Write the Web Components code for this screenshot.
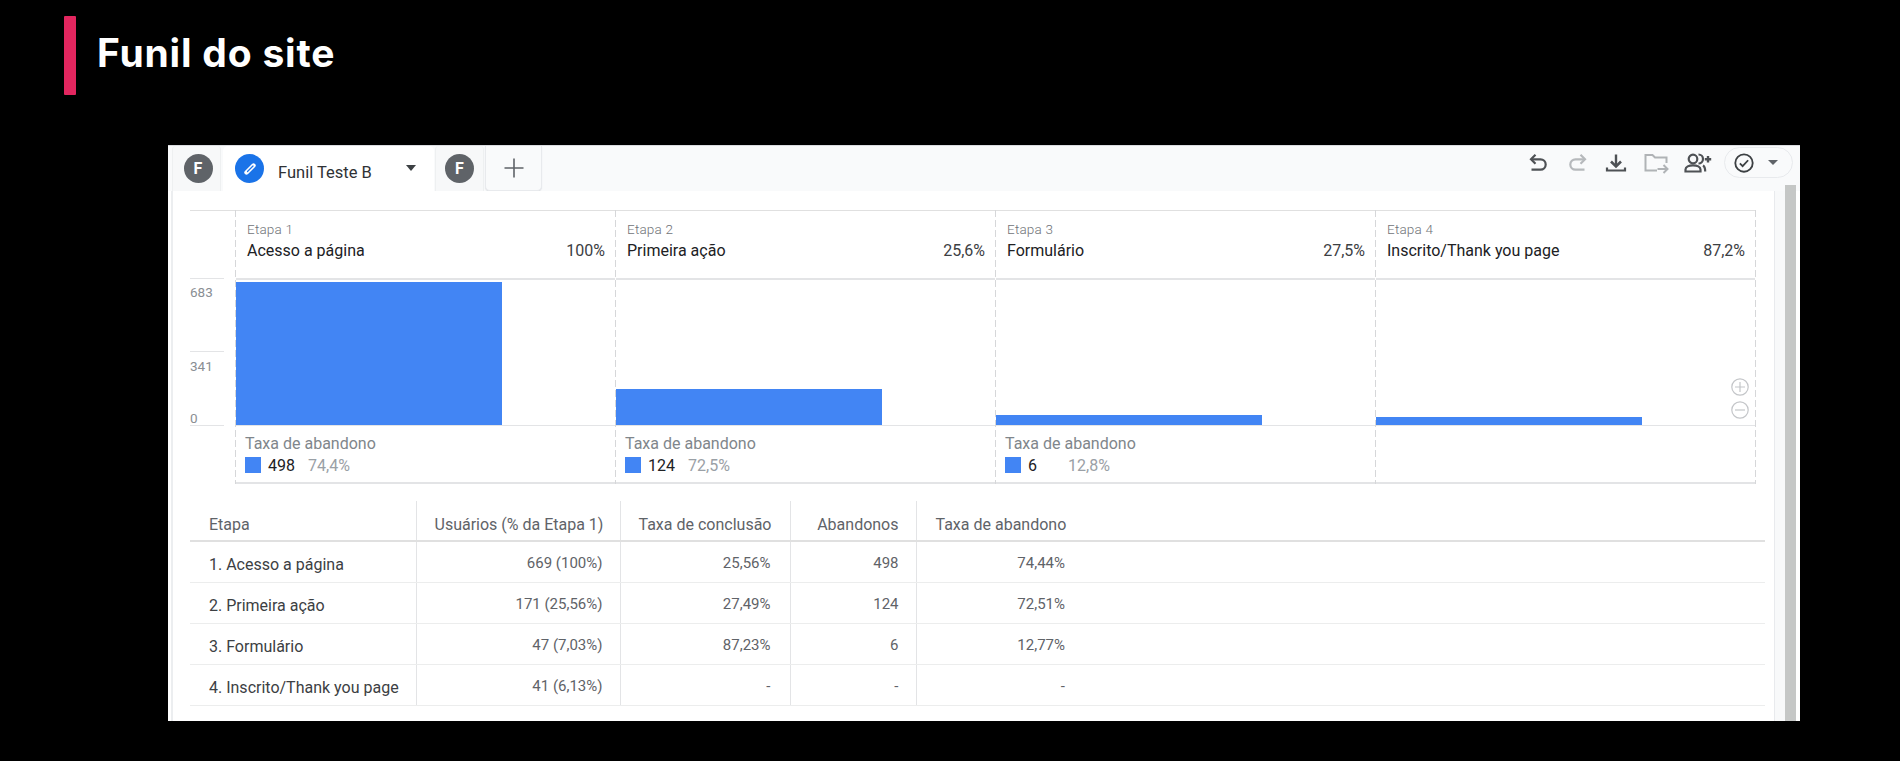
<!DOCTYPE html>
<html lang="pt">
<head>
<meta charset="utf-8">
<title>Funil do site</title>
<style>
    html, body { margin: 0; background: #000; height: 761px; overflow: hidden; }
    body { font-family: Roboto, "Liberation Sans", sans-serif; }
</style>
</head>
<body>
<slide-title>Funil do site</slide-title>
<report-window>
    <report-tabs slot="tabs"></report-tabs>
    <funnel-chart>
        <funnel-step index="1" name="Acesso a página" rate="100%" height="143" count="498" drop="74,4%"></funnel-step>
        <funnel-step index="2" name="Primeira ação" rate="25,6%" height="36" count="124" drop="72,5%"></funnel-step>
        <funnel-step index="3" name="Formulário" rate="27,5%" height="10" count="6" drop="12,8%"></funnel-step>
        <funnel-step index="4" name="Inscrito/Thank you page" rate="87,2%" height="8"></funnel-step>
    </funnel-chart>
    <funnel-table></funnel-table>
</report-window>

<script>
const titleTemplate = document.createElement("template");
titleTemplate.innerHTML = `
    <style>
        :host { display: flex; align-items: center; gap: 21px; height: 79px; margin: 16px 0 50px 64px; }
        .bar { width: 12px; height: 79px; background: #e2265f; border-radius: 1px; }
        h1 { margin: 0; padding-bottom: 7px; color: #fff; font: 700 39px Inter, "Open Sans", sans-serif; letter-spacing: 0.8px; }
    </style>
    <div class="bar"></div>
    <h1><slot></slot></h1>
`;

class SlideTitle extends HTMLElement {
    constructor() {
        super();
        this.attachShadow({ mode: "open" }).append(titleTemplate.content.cloneNode(true));
    }
}

const windowTemplate = document.createElement("template");
windowTemplate.innerHTML = `
    <style>
        :host { display: block; width: 1632px; height: 576px; margin-left: 168px; background: #fff; overflow: hidden; }
        .body { display: flex; height: 530px; }
        .panel { width: 1604px; margin-left: 3px; padding-left: 17px; box-sizing: border-box; background: #fff; border-left: 2px solid #eceef0; border-right: 1px solid #e8eaed; }
        .gutter { width: 10px; background: #f8f9fa; }
        .thumb { width: 11px; margin-top: -6px; background: #c5c7c6; }
    </style>
    <slot name="tabs"></slot>
    <div class="body">
        <div class="panel"><slot></slot></div>
        <div class="gutter"></div>
        <div class="thumb"></div>
    </div>
`;

class ReportWindow extends HTMLElement {
    constructor() {
        super();
        this.attachShadow({ mode: "open" }).append(windowTemplate.content.cloneNode(true));
    }
}

const tabsTemplate = document.createElement("template");
tabsTemplate.innerHTML = `
    <style>
        :host { display: flex; align-items: stretch; height: 46px; padding-left: 4px; background: #f9fafb; box-sizing: border-box; border-top: 1px solid #dadce0; }
        .avatar { width: 29px; height: 29px; border-radius: 50%; background: #5f6368; color: #fff; font: 700 16px/29px Roboto, sans-serif; text-align: center; flex: none; }
        .tab { display: flex; align-items: center; justify-content: center; box-sizing: border-box; background: #f7f8f9; border: 1px solid #eef0f1; border-width: 0 1px; border-radius: 4px 4px 0 0; }
        .first { width: 49px; margin-right: 2px; padding-left: 3px; }
        .active { display: flex; align-items: center; width: 211px; padding-left: 12px; box-sizing: border-box; background: #fff; border-radius: 5px 5px 0 0; }
        .pen { width: 29px; height: 29px; border-radius: 50%; background: #1a73e8; display: flex; align-items: center; justify-content: center; flex: none; }
        .name { margin: 8px 0 0 14px; font: 400 16.5px Roboto, sans-serif; color: #2f3235; flex: 1; }
        .caret { width: 0; height: 0; border: 5.5px solid transparent; border-top: 6px solid #3c4043; border-bottom: 0; margin: -2px 18px 0 0; }
        .second { width: 49px; margin: 0 1px 0 1px; }
        .add { width: 57px; display: flex; align-items: center; justify-content: center; border: 1px solid #e8eaed; border-top: 0; border-radius: 0 0 5px 5px; box-sizing: border-box; background: #f9fafb; box-shadow: 0 1px 1px #dfe1e4; }
        .tools { margin-left: auto; display: flex; align-items: flex-start; padding-right: 7px; }
        .tools svg { display: block; }
        .tool { width: 40px; display: flex; justify-content: center; margin-top: 5px; }
        .tool:nth-child(3) { margin-left: -2px; }
        .tool:nth-child(5) { margin-left: 2px; }
        .pill { display: flex; align-items: center; gap: 13px; width: 69px; height: 31px; box-sizing: border-box; padding-left: 8px; margin: 1px 0 0 6px; border: 1px solid #e8eaed; border-radius: 16px; }
        .mini { width: 0; height: 0; border: 5px solid transparent; border-top: 5px solid #5f6368; border-bottom: 0; }
    </style>
    <div class="tab first"><div class="avatar">F</div></div>
    <div class="active">
        <div class="pen">
            <svg width="20" height="20" viewBox="0 0 20 20" fill="none" stroke-linecap="round"><path d="M6.500 13.500 13.500 6.500" stroke="#fff" stroke-width="4.400"/><path d="M7.500 12.500 13 7" stroke="#1a73e8" stroke-width="1.200"/></svg>
        </div>
        <span class="name">Funil Teste B</span>
        <div class="caret"></div>
    </div>
    <div class="tab second"><div class="avatar">F</div></div>
    <div class="add">
        <svg width="20" height="20" viewBox="0 0 20 20"><path d="M10 .5v19M.5 10h19" stroke="#5f6368" stroke-width="1.600" fill="none"/></svg>
    </div>
    <div class="tools">
        <div class="tool"><svg width="24" height="24" viewBox="0 0 24 24" fill="none" stroke="#4e5155" stroke-width="2.200"><path d="M9.500 3.800 5 8.300l4.500 4.500"/><path d="M5 8.300h9.500a5.200 5.200 0 0 1 0 10.400H5.500"/></svg></div>
        <div class="tool"><svg width="24" height="24" viewBox="0 0 24 24" fill="none" stroke="#b6b9bc" stroke-width="2.200"><path d="M14.500 3.800 19 8.300l-4.500 4.500"/><path d="M19 8.300H9.500a5.200 5.200 0 0 0 0 10.400H18.500"/></svg></div>
        <div class="tool"><svg width="24" height="24" viewBox="0 0 24 24" fill="none" stroke="#4e5155" stroke-width="2.400"><path d="M12 3.500v11.500"/><path d="M7 10.500l5 5 5-5" stroke-width="2.600"/><path d="M3 16.500v3h18v-3" stroke-width="2.200"/></svg></div>
        <div class="tool"><svg width="26" height="24" viewBox="0 0 26 24" fill="none" stroke="#b0b3b6" stroke-width="2"><path d="M14 19.500H2.500V4h7l2.500 2.500h11.500V12"/><path d="M14.500 18h9.500M20.500 14 24.500 18 20.500 22"/></svg></div>
        <div class="tool"><svg width="30" height="24" viewBox="0 0 30 24" fill="none" stroke="#4e5155" stroke-width="2.200"><circle cx="10" cy="8" r="4.300"/><path d="M2.500 20.500v-2c0-2.700 3.300-4.200 7.500-4.200s7.500 1.500 7.500 4.200v2z"/><path d="M15.500 3.500a4.500 4.500 0 0 1 0 9M20 14.500c1.600.9 2.200 2.300 2.200 6"/><path d="M25 5v6.500M21.800 8.200h6.400" stroke-width="2.400"/></svg></div>
        <div class="pill">
            <svg width="22" height="22" viewBox="0 0 24 24" fill="none" stroke="#3c4043" stroke-width="2"><circle cx="12" cy="12" r="9.500"/><path d="m7.500 12.500 3 3 6-6.500"/></svg>
            <div class="mini"></div>
        </div>
    </div>
`;

class ReportTabs extends HTMLElement {
    constructor() {
        super();
        this.attachShadow({ mode: "open" }).append(tabsTemplate.content.cloneNode(true));
    }
}

const chartTemplate = document.createElement("template");
chartTemplate.innerHTML = `
    <style>
        :host { display: flex; position: relative; width: 1566px; margin-top: 19px; font-family: Roboto, sans-serif; }
        .axis { width: 45px; flex: none; padding-top: 67px; box-sizing: border-box; border-top: 1px solid #e0e0e0; }
        .ticks { display: flex; flex-direction: column; color: #8a8e93; font-size: 13.5px; }
        .tick { height: 73px; box-sizing: border-box; width: 34px; padding-top: 5px; border-top: 1px solid #e3e4e6; }
        .tick + .tick { height: 74px; padding-top: 6px; }
        .zero { height: 0; width: 34px; border-top: 1px solid #e3e4e6; }
        .zero span { display: block; transform: translateY(-16px); }
        .steps { display: flex; padding-left: 1px; background: repeating-linear-gradient(#d6d7d9 0 7px, transparent 7px 10px) left top / 1px 100% no-repeat; }
        .zoom { position: absolute; right: 7px; top: 168px; display: flex; flex-direction: column; gap: 5px; }
        .zoom svg { display: block; }
    </style>
    <div class="axis">
        <div class="ticks">
            <div class="tick">683</div>
            <div class="tick">341</div>
            <div class="zero"><span>0</span></div>
        </div>
    </div>
    <div class="steps"><slot></slot></div>
    <div class="zoom">
        <svg width="18" height="18" viewBox="0 0 18 18" fill="none" stroke="#c4c6c9" stroke-width="1.200"><circle cx="9" cy="9" r="8.200"/><path d="M9 4v10M4 9h10"/></svg>
        <svg width="18" height="18" viewBox="0 0 18 18" fill="none" stroke="#c4c6c9" stroke-width="1.200"><circle cx="9" cy="9" r="8.200"/><path d="M4 9h10"/></svg>
    </div>
`;

class FunnelChart extends HTMLElement {
    constructor() {
        super();
        this.attachShadow({ mode: "open" }).append(chartTemplate.content.cloneNode(true));
    }
}

const stepTemplate = document.createElement("template");
stepTemplate.innerHTML = `
    <style>
        :host { display: grid; grid-template-rows: 70px 146px 58px; width: 380px; box-sizing: border-box; padding-right: 1px; background: repeating-linear-gradient(#d6d7d9 0 7px, transparent 7px 10px) right top / 1px 100% no-repeat; }
        .head { padding: 9px 10px 0 11px; border-top: 1px solid #e0e0e0; border-bottom: 2px solid #e3e4e6; box-sizing: border-box; }
        .index { font-size: 13.5px; font-weight: 300; color: #6f7378; line-height: 18px; letter-spacing: 0.2px; }
        .row { display: flex; justify-content: space-between; margin-top: 2px; font-size: 16px; line-height: 22px; color: #202124; }
        .rate { color: #3c4043; }
        .plot { display: flex; align-items: flex-end; border-bottom: 1px solid #e3e4e6; box-sizing: border-box; }
        .bar { width: 266px; background: #4285f4; }
        .foot { padding: 7px 0 0 9px; box-sizing: border-box; border-bottom: 2px solid #e3e4e6; }
        .label { font-size: 16px; line-height: 22px; color: #80868b; }
        .values { display: flex; align-items: center; height: 22px; margin-top: -1px; font-size: 16px; }
        .swatch { width: 16px; height: 16px; background: #4285f4; margin-right: 7px; flex: none; }
        .count { width: 40px; color: #202124; }
        .drop { color: #9aa0a6; }
    </style>
    <div class="head">
        <div class="index"></div>
        <div class="row"><span class="name"></span><span class="rate"></span></div>
    </div>
    <div class="plot"><div class="bar"></div></div>
    <div class="foot"></div>
`;

class FunnelStep extends HTMLElement {
    constructor() {
        super();
        const shadow = this.attachShadow({ mode: "open" });
        shadow.append(stepTemplate.content.cloneNode(true));
        shadow.querySelector(".index").textContent = `Etapa ${this.getAttribute("index")}`;
        shadow.querySelector(".name").textContent = this.getAttribute("name");
        shadow.querySelector(".rate").textContent = this.getAttribute("rate");
        shadow.querySelector(".bar").style.height = `${this.getAttribute("height")}px`;

        if (this.hasAttribute("count")) {
            shadow.querySelector(".foot").innerHTML = `
                <div class="label">Taxa de abandono</div>
                <div class="values">
                    <div class="swatch"></div>
                    <span class="count">${this.getAttribute("count")}</span>
                    <span class="drop">${this.getAttribute("drop")}</span>
                </div>`;
        }
    }
}

const tableTemplate = document.createElement("template");
tableTemplate.innerHTML = `
    <style>
        :host { display: block; width: 1575px; margin-top: 17px; font-family: Roboto, sans-serif; }
        table { border-collapse: collapse; table-layout: fixed; width: 100%; }
        th, td { padding: 3px 19px 0 18px; text-align: right; border-left: 1px solid #e3e4e6; box-sizing: border-box; white-space: nowrap; }
        th { height: 40px; padding-top: 7px; font-weight: 400; font-size: 16px; color: #5f6368; border-bottom: 2px solid #e0e0e0; }
        td { height: 41px; font-size: 15px; color: #5f6368; border-bottom: 1px solid #eceded; }
        th:first-child, td:first-child { text-align: left; border-left: 0; font-size: 16px; padding-left: 19px; }
        td:first-child { color: #3c4043; padding-top: 5px; }
        td:nth-child(2) { padding-right: 17px; }
        th:nth-child(4), td:nth-child(4) { padding-right: 17px; }
        th:nth-child(5) { text-align: left; padding-left: 19px; }
        th:last-child, td:last-child { border-left: 0; }
    </style>
    <table>
        <colgroup><col style="width:226px"><col style="width:204px"><col style="width:170px"><col style="width:126px"><col style="width:168px"><col></colgroup>
        <thead><tr><th>Etapa</th><th>Usuários (% da Etapa 1)</th><th>Taxa de conclusão</th><th>Abandonos</th><th>Taxa de abandono</th><th></th></tr></thead>
        <tbody></tbody>
    </table>
`;

const tableRows = [
    ["1. Acesso a página", "669 (100%)", "25,56%", "498", "74,44%"],
    ["2. Primeira ação", "171 (25,56%)", "27,49%", "124", "72,51%"],
    ["3. Formulário", "47 (7,03%)", "87,23%", "6", "12,77%"],
    ["4. Inscrito/Thank you page", "41 (6,13%)", "-", "-", "-"],
];

class FunnelTable extends HTMLElement {
    constructor() {
        super();
        const shadow = this.attachShadow({ mode: "open" });
        shadow.append(tableTemplate.content.cloneNode(true));
        const body = shadow.querySelector("tbody");
        for (const row of tableRows) {
            const tr = document.createElement("tr");
            for (const value of [...row, ""]) {
                const td = document.createElement("td");
                td.textContent = value;
                tr.append(td);
            }
            body.append(tr);
        }
    }
}

customElements.define("slide-title", SlideTitle);
customElements.define("report-window", ReportWindow);
customElements.define("report-tabs", ReportTabs);
customElements.define("funnel-chart", FunnelChart);
customElements.define("funnel-step", FunnelStep);
customElements.define("funnel-table", FunnelTable);
</script>
</body>
</html>
